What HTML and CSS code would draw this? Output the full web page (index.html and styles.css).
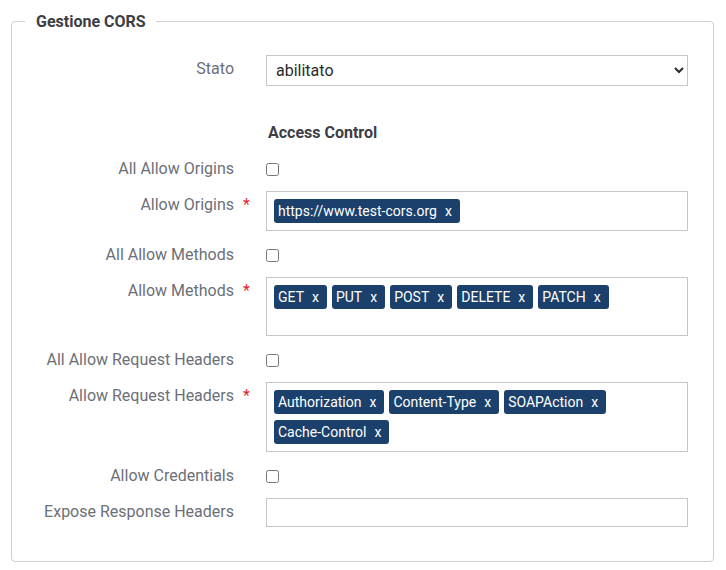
FILE: index.html
```html
<!DOCTYPE html>
<html lang="it">
<head>
<meta charset="utf-8">
<title>Gestione CORS</title>
<link rel="stylesheet" href="styles.css">
</head>
<body>
<fieldset class="panel">
  <legend class="panel-title">Gestione CORS</legend>

  <div class="row">
    <label class="lbl">Stato</label>
    <span class="req"></span>
    <div class="field">
      <select class="select"><option>abilitato</option><option>disabilitato</option></select>
    </div>
  </div>

  <div class="section-title">Access Control</div>

  <div class="row row-check">
    <label class="lbl">All Allow Origins</label>
    <span class="req"></span>
    <div class="field"><input type="checkbox" class="check"></div>
  </div>

  <div class="row">
    <label class="lbl">Allow Origins</label>
    <span class="req">*</span>
    <div class="field">
      <div class="tags">
        <span class="tag">https://www.test-cors.org<span class="tag-x">x</span></span>
      </div>
    </div>
  </div>

  <div class="row row-check">
    <label class="lbl">All Allow Methods</label>
    <span class="req"></span>
    <div class="field"><input type="checkbox" class="check"></div>
  </div>

  <div class="row">
    <label class="lbl">Allow Methods</label>
    <span class="req">*</span>
    <div class="field">
      <div class="tags tags-tall">
        <span class="tag">GET<span class="tag-x">x</span></span>
        <span class="tag">PUT<span class="tag-x">x</span></span>
        <span class="tag">POST<span class="tag-x">x</span></span>
        <span class="tag">DELETE<span class="tag-x">x</span></span>
        <span class="tag">PATCH<span class="tag-x">x</span></span>
      </div>
    </div>
  </div>

  <div class="row row-check">
    <label class="lbl">All Allow Request Headers</label>
    <span class="req"></span>
    <div class="field"><input type="checkbox" class="check"></div>
  </div>

  <div class="row">
    <label class="lbl">Allow Request Headers</label>
    <span class="req">*</span>
    <div class="field">
      <div class="tags">
        <span class="tag">Authorization<span class="tag-x">x</span></span>
        <span class="tag">Content-Type<span class="tag-x">x</span></span>
        <span class="tag">SOAPAction<span class="tag-x">x</span></span>
        <span class="tag">Cache-Control<span class="tag-x">x</span></span>
      </div>
    </div>
  </div>

  <div class="row row-check">
    <label class="lbl">Allow Credentials</label>
    <span class="req"></span>
    <div class="field"><input type="checkbox" class="check"></div>
  </div>

  <div class="row">
    <label class="lbl">Expose Response Headers</label>
    <span class="req"></span>
    <div class="field"><input type="text" class="text-input"></div>
  </div>
</fieldset>
</body>
</html>
```
FILE: styles.css
```css
html, body {
  margin: 0;
  padding: 0;
  background: #ffffff;
}

body {
  font-family: Roboto, "Noto Sans", sans-serif;
  font-size: 16px;
  color: #333333;
}

.panel {
  box-sizing: border-box;
  width: 703px;
  margin: 9px 0 0 11px;
  padding: 22px 0 34px 0;
  border: 1px solid #cfcfcf;
  border-radius: 4px;
  min-width: 0;
}

.panel-title {
  margin-left: 13px;
  padding: 2px 10px 0 11px;
  font-size: 16px;
  font-weight: 700;
  line-height: 22px;
  color: #3d3d44;
}

.row {
  display: grid;
  grid-template-columns: 222px 32px 422px;
  align-items: start;
  margin-bottom: 10px;
}

.row:last-child {
  margin-bottom: 0;
}

.row-check {
  min-height: 26px;
}

.lbl {
  text-align: right;
  padding-top: 3px;
  line-height: 22px;
  font-size: 16px;
  color: #6c6f78;
  white-space: nowrap;
}

.req {
  padding-top: 3px;
  padding-left: 9px;
  line-height: 22px;
  font-size: 16px;
  color: #e3262e;
}

.field {
  min-width: 0;
}

.section-title {
  margin-left: 256px;
  padding-top: 26px;
  margin-bottom: 11px;
  line-height: 22px;
  font-size: 16px;
  font-weight: 700;
  color: #3d3d44;
}

.select {
  box-sizing: border-box;
  width: 422px;
  height: 31px;
  margin: 0;
  padding: 0 4px 0 5px;
  border: 1px solid #c6c6c6;
  border-radius: 0;
  background-color: #ffffff;
  font-family: Roboto, "Noto Sans", sans-serif;
  font-size: 16px;
  color: #2b2b2b;
}

.check {
  display: block;
  width: 13px;
  height: 13px;
  margin: 8px 0 0 0;
}

.tags {
  box-sizing: border-box;
  display: flex;
  flex-wrap: wrap;
  align-content: flex-start;
  gap: 6px 5px;
  padding: 7px;
  border: 1px solid #c6c6c6;
  min-height: 40px;
}

.tags-tall {
  min-height: 59px;
}

.tag {
  display: inline-flex;
  align-items: center;
  height: 24px;
  padding: 0 8px 0 4px;
  border-radius: 3px;
  background: #1b406c;
  color: #ffffff;
  font-size: 14px;
  line-height: 24px;
  white-space: nowrap;
}

.tag-x {
  margin-left: 8px;
}

.text-input {
  box-sizing: border-box;
  display: block;
  width: 422px;
  height: 29px;
  margin: 0;
  padding: 0 8px;
  border: 1px solid #c6c6c6;
  border-radius: 0;
  font-family: Roboto, "Noto Sans", sans-serif;
  font-size: 16px;
}
```
